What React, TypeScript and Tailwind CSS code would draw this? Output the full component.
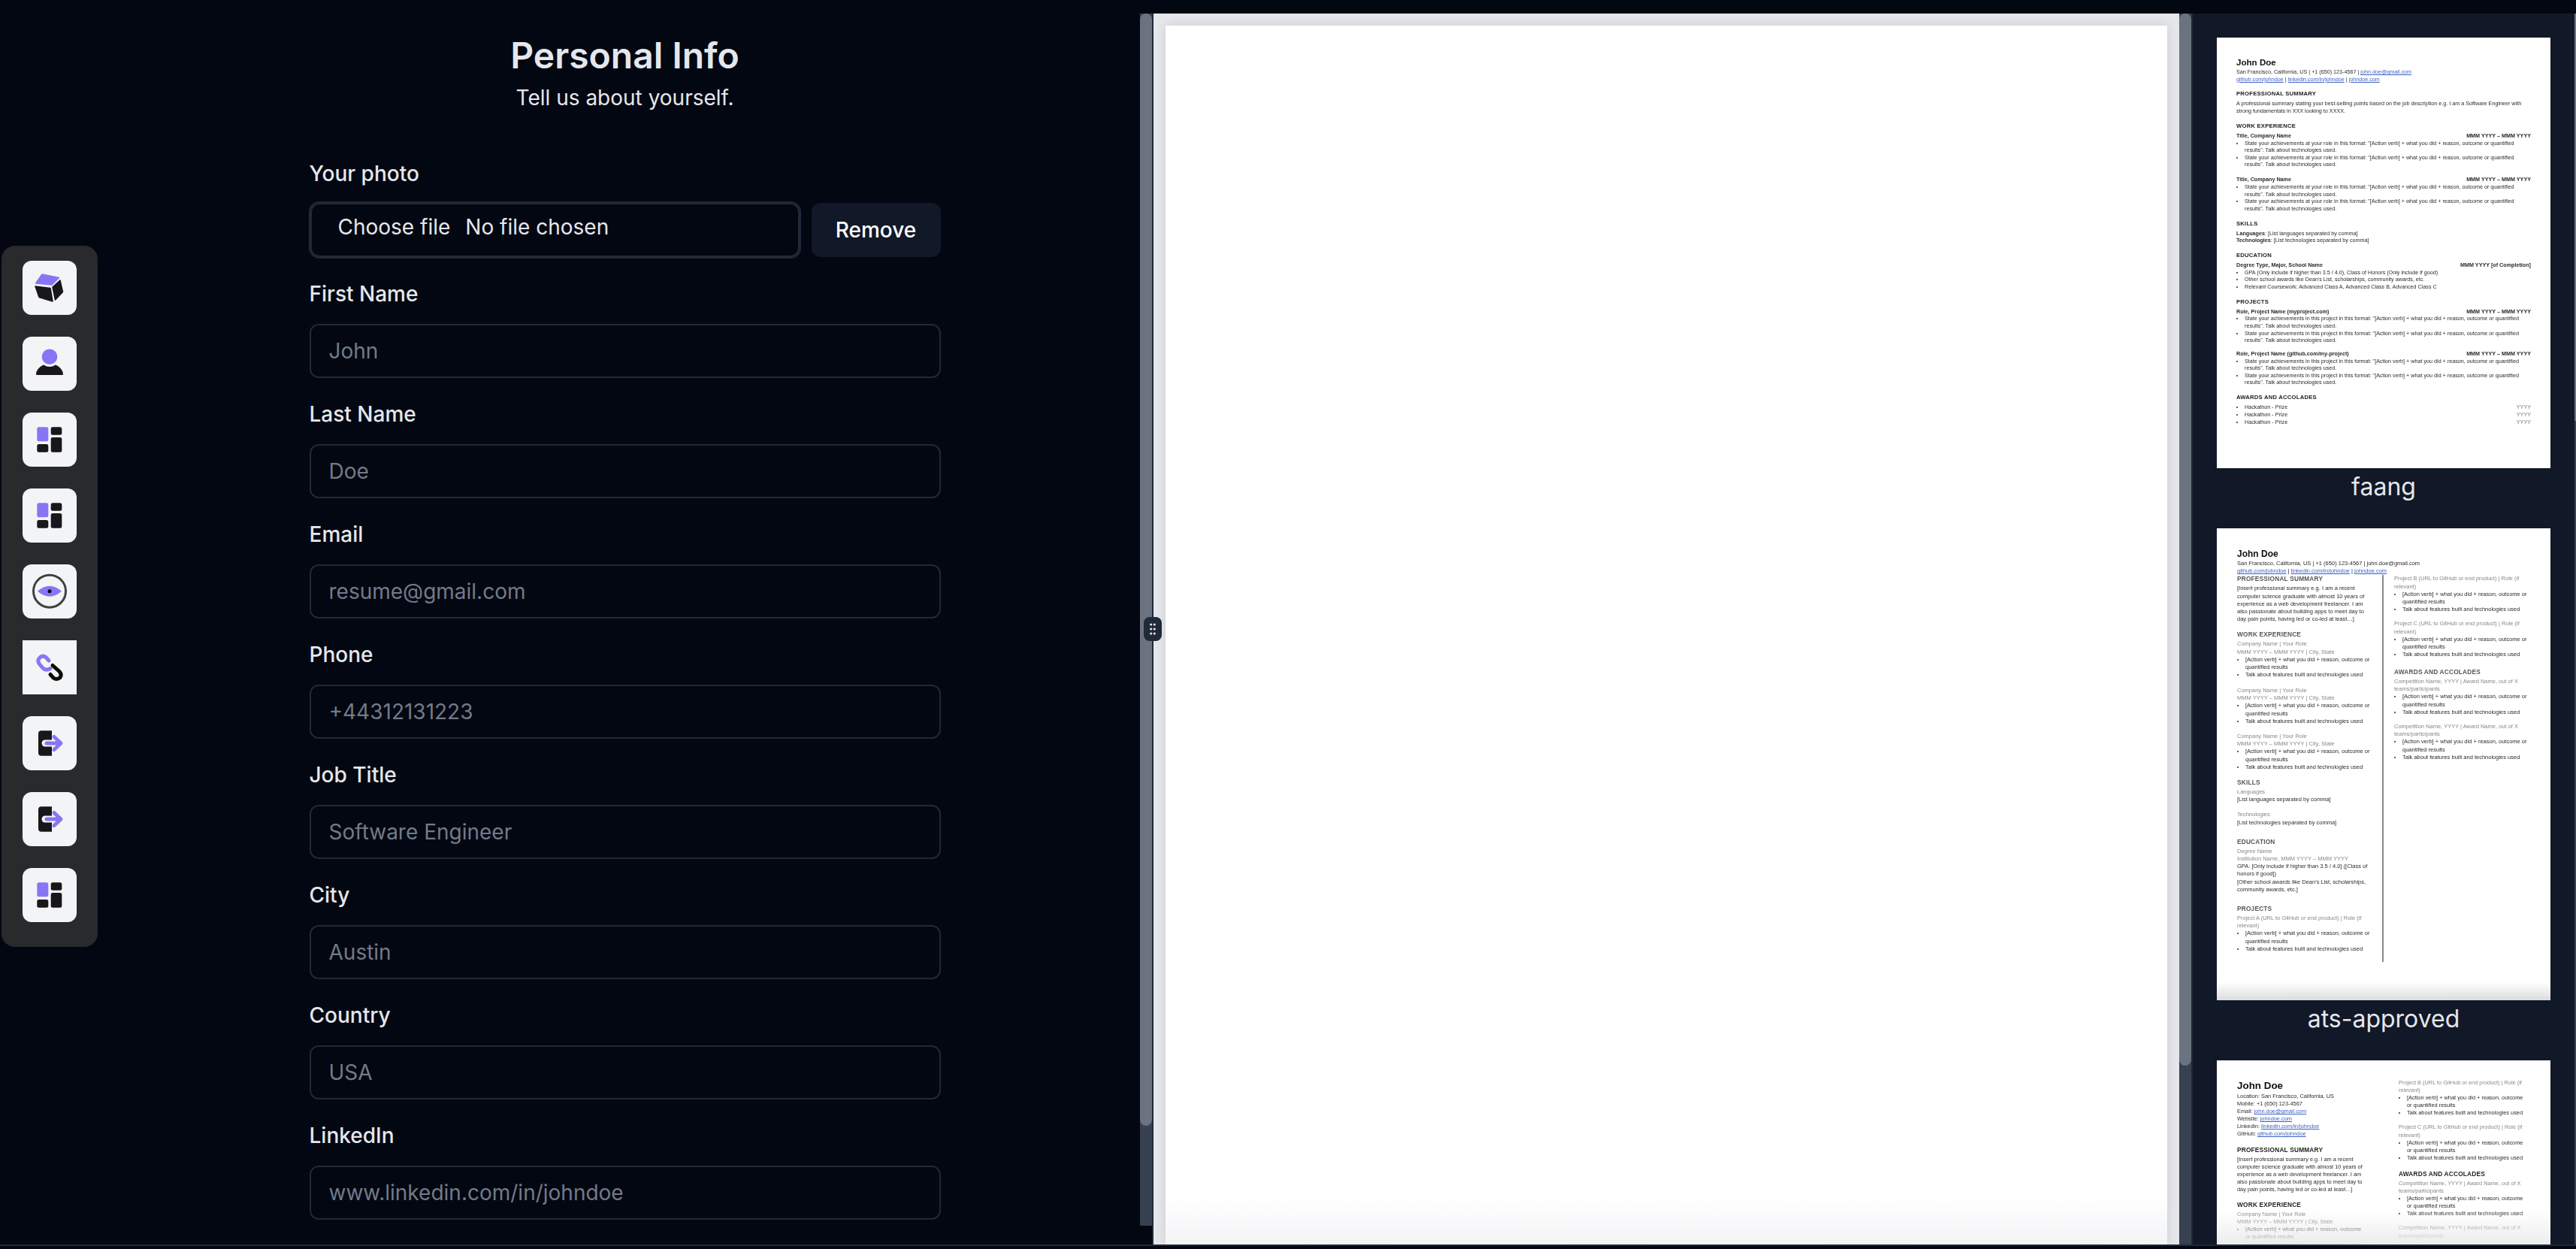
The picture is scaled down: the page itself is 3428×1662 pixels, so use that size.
import type { ReactNode } from "react"

const fields = [
  ["First Name", "John"],
  ["Last Name", "Doe"],
  ["Email", "resume@gmail.com"],
  ["Phone", "+44312131223"],
  ["Job Title", "Software Engineer"],
  ["City", "Austin"],
  ["Country", "USA"],
  ["LinkedIn", "www.linkedin.com/in/johndoe"],
]

const PURPLE = "#8775f5"
const DARK = "#18171c"

function CubeIcon() {
  return (
    <svg viewBox="0 0 72 72" className="w-[72px] h-[72px]">
      <path d="M17.5 30 26 18 48.5 22.5 39 32Z" fill={PURPLE} stroke={PURPLE} strokeWidth="1.5" strokeLinejoin="round" />
      <path d="M17 34 37 36.5 40 54 22 48.5Z" fill={DARK} stroke={DARK} strokeWidth="1.5" strokeLinejoin="round" />
      <path d="M50 26 53.5 41.5 43.5 52 40 35Z" fill={DARK} stroke={DARK} strokeWidth="1.5" strokeLinejoin="round" />
    </svg>
  )
}

function PersonIcon() {
  return (
    <svg viewBox="0 0 72 72" className="w-[72px] h-[72px]">
      <circle cx="36" cy="26.7" r="10.3" fill={PURPLE} />
      <path d="M18 50C18 44.500 23 39.500 28 37.500Q36 42.500 44 37.500C49 39.500 54 44.500 54 50Q54 51 53 51H19Q18 51 18 50Z" fill={DARK} />
    </svg>
  )
}

function LayoutIcon() {
  return (
    <svg viewBox="0 0 72 72" className="w-[72px] h-[72px]">
      <rect x="19.300" y="19.300" width="15" height="19" rx="2.500" fill={PURPLE} />
      <rect x="37.700" y="19.300" width="14.600" height="10.400" rx="2.500" fill={DARK} />
      <rect x="19.300" y="42" width="15" height="10.700" rx="2.500" fill={DARK} />
      <rect x="37.700" y="33" width="14.600" height="19.700" rx="2.500" fill={DARK} />
    </svg>
  )
}

function EyeIcon() {
  return (
    <svg viewBox="0 0 72 72" className="w-[72px] h-[72px]">
      <circle cx="36" cy="35.700" r="21.500" fill="none" stroke="#404040" strokeWidth="3" />
      <path d="M20 35.700Q28 28.700 36 28.700T52 35.700Q44 42.700 36 42.700T20 35.700Z" fill={PURPLE} />
      <circle cx="36" cy="35.700" r="2.500" fill="#0a0a0a" />
    </svg>
  )
}

function LinkIcon() {
  return (
    <svg viewBox="0 0 72 72" className="w-[72px] h-[72px]" fill="none" strokeWidth="5" strokeLinecap="round">
      <path d="M35 27 31.500 23Q27.500 19.500 23.500 22.500 19 26.500 22 31L27 37Q31 41 37 37.500" stroke={PURPLE} />
      <path d="M40 33.500 49 41.500Q53 46 49.500 50 45 53 41 50L37 45.500" stroke="#0a0a0a" />
    </svg>
  )
}

function ExitIcon() {
  return (
    <svg viewBox="0 0 72 72" className="w-[72px] h-[72px]" fill="none">
      <path d="M25 19.300H39V52.700H25Q21 52.700 21 48.700V23.300Q21 19.300 25 19.300Z" fill={DARK} />
      <path d="M30 36H40" stroke="#f3f4f6" strokeWidth="9" strokeLinecap="round" />
      <path d="M32 36H50M42 27.500 51 36 42 44.500" stroke={PURPLE} strokeWidth="5" strokeLinecap="round" strokeLinejoin="round" />
    </svg>
  )
}

function SideButton({ children, square }: { children: ReactNode; square?: boolean }) {
  return <div className={`w-[72px] h-[72px] bg-[#f3f4f6] ${square ? "" : "rounded-[12px]"}`}>{children}</div>
}

function Sidebar() {
  return (
    <div className="absolute left-[2px] top-[327px] w-[128px] flex flex-col items-center gap-[29px] pt-[20px] pb-[33px] bg-[#292a2c] rounded-[18px]">
      <SideButton><CubeIcon /></SideButton>
      <SideButton><PersonIcon /></SideButton>
      <SideButton><LayoutIcon /></SideButton>
      <SideButton><LayoutIcon /></SideButton>
      <SideButton><EyeIcon /></SideButton>
      <SideButton square><LinkIcon /></SideButton>
      <SideButton><ExitIcon /></SideButton>
      <SideButton><ExitIcon /></SideButton>
      <SideButton><LayoutIcon /></SideButton>
    </div>
  )
}

function FormPanel() {
  return (
    <div className="w-[1517px] shrink-0 h-full overflow-hidden pl-[146px] flex flex-col items-center">
      <h1 className="mt-[28px] h-[56px] leading-[56px] text-[48px] font-semibold text-[#e5e7eb]">Personal Info</h1>
      <p className="mt-[8px] h-[40px] leading-[40px] text-[28px] text-[#e5e7eb]">Tell us about yourself.</p>
      <div className="w-[840px] mt-[61px]">
        <label className="block h-[40px] leading-[40px] text-[28px] font-medium text-[#e5e7eb]">Your photo</label>
        <div className="mt-[19px] flex gap-[16px] mb-[29px]">
          <div className="w-[651px] h-[72px] ml-[1px] flex items-center border-2 border-[#1f2937] outline-2 outline-[#1f2937] rounded-[12px] pl-[35px] pb-[8px] text-[28px] leading-[40px] text-[#e5e7eb]">
            <span className="mr-[20px]">Choose file</span>
            <span>No file chosen</span>
          </div>
          <button className="flex-1 h-[72px] bg-[#111827] rounded-[12px] text-[28px] font-medium text-white">Remove</button>
        </div>
        {fields.map(([label, placeholder]) => (
          <div key={label} className="mb-[28px]">
            <label className="block h-[40px] leading-[40px] text-[28px] font-medium text-[#e5e7eb]">{label}</label>
            <input
              placeholder={placeholder}
              className="mt-[20px] block w-full h-[72px] px-[24px] border-2 border-[#1f2937] rounded-[12px] bg-transparent text-[28px] placeholder:text-[#737a87]"
            />
          </div>
        ))}
      </div>
    </div>
  )
}

function Scrollbar({ thumb, track }: { thumb: string; track: string }) {
  return (
    <div className={`w-[16px] shrink-0 bg-[#374151] ${track}`}>
      <div className={`w-full bg-[#6b7280] rounded-full ${thumb}`} />
    </div>
  )
}

function Handle() {
  return (
    <div className="absolute left-[1522px] top-[821px] w-[24px] h-[32px] rounded-[8px] bg-[#1f2937] flex items-center justify-center">
      <svg viewBox="0 0 24 32" className="w-[24px] h-[32px]" fill="#e5e7eb">
        <circle cx="9.700" cy="10" r="1.600" />
        <circle cx="14.300" cy="10" r="1.600" />
        <circle cx="9.700" cy="16" r="1.600" />
        <circle cx="14.300" cy="16" r="1.600" />
        <circle cx="9.700" cy="22" r="1.600" />
        <circle cx="14.300" cy="22" r="1.600" />
      </svg>
    </div>
  )
}

function Preview() {
  return (
    <div className="w-[1365px] shrink-0 h-full overflow-hidden bg-[#e5e7eb] pt-[16px] pl-[16px]">
      <div className="relative w-[1333px] h-full bg-white shadow-[0_0_14px_rgba(0,0,0,0.12)]">
        <div className="absolute left-0 right-0 bottom-0 h-[64px] bg-gradient-to-b from-white to-[#f3f4f6]" />
      </div>
    </div>
  )
}

const Lnk = ({ children }: { children: ReactNode }) => <span className="text-[#3b5fc4] underline">{children}</span>

function Bullets({ items }: { items: string[] }) {
  return (
    <ul className="list-disc pl-[11px]">
      {items.map((t, i) => (
        <li key={i}>{t}</li>
      ))}
    </ul>
  )
}

function Between({ left, right, bold = true }: { left: string; right: string; bold?: boolean }) {
  return (
    <div className={`flex justify-between ${bold ? "font-bold" : ""}`}>
      <span>{left}</span>
      <span>{right}</span>
    </div>
  )
}

const roleBullet = 'State your achievements at your role in this format: "[Action verb] + what you did + reason, outcome or quantified\nresults". Talk about technologies used.'
const projBullet = 'State your achievements in this project in this format: "[Action verb] + what you did + reason, outcome or quantified\nresults". Talk about technologies used.'

function FaangThumb() {
  const H = ({ children, top = "mt-[10.300px]" }: { children: ReactNode; top?: string }) => (
    <div className={`${top} mb-[3px] h-[10px] leading-[10px] text-[7.700px] font-bold tracking-[0.2px] text-[#222]`}>{children}</div>
  )
  return (
    <div className="h-[573px] bg-white px-[26px] pt-[26px] text-[7.200px] leading-[9.600px] text-[#2a2a2a] whitespace-pre font-['Liberation_Sans',sans-serif] blur-[0.3px]">
      <div className="h-[14px] leading-[14px] text-[11.600px] font-bold text-[#111]">John Doe</div>
      <div className="mt-[1px]">San Francisco, California, US | +1 (650) 123-4567 | <Lnk>john.doe@gmail.com</Lnk></div>
      <div><Lnk>github.com/johndoe</Lnk> | <Lnk>linkedin.com/in/johndoe</Lnk> | <Lnk>johndoe.com</Lnk></div>
      <H>PROFESSIONAL SUMMARY</H>
      <div>{"A professional summary stating your best-selling points based on the job description e.g. I am a Software Engineer with\nstrong fundamentals in XXX looking to XXXX."}</div>
      <H>WORK EXPERIENCE</H>
      <Between left="Title, Company Name" right="MMM YYYY – MMM YYYY" />
      <Bullets items={[roleBullet, roleBullet]} />
      <div className="mt-[10.400px]"><Between left="Title, Company Name" right="MMM YYYY – MMM YYYY" /></div>
      <Bullets items={[roleBullet, roleBullet]} />
      <H>SKILLS</H>
      <div><b>Languages</b>: [List languages separated by comma]</div>
      <div><b>Technologies</b>: [List technologies separated by comma]</div>
      <H>EDUCATION</H>
      <Between left="Degree Type, Major, School Name" right="MMM YYYY [of Completion]" />
      <Bullets items={["GPA (Only include if higher than 3.5 / 4.0), Class of Honors (Only include if good)", "Other school awards like Dean's List, scholarships, community awards, etc.", "Relevant Coursework: Advanced Class A, Advanced Class B, Advanced Class C"]} />
      <H>PROJECTS</H>
      <Between left="Role, Project Name (myproject.com)" right="MMM YYYY – MMM YYYY" />
      <Bullets items={[projBullet, projBullet]} />
      <div className="mt-[8.400px]"><Between left="Role, Project Name (github.com/my-project)" right="MMM YYYY – MMM YYYY" /></div>
      <Bullets items={[projBullet, projBullet]} />
      <H>AWARDS AND ACCOLADES</H>
      {[0, 1, 2].map((i) => (
        <div key={i} className="flex justify-between">
          <ul className="list-disc pl-[11px]"><li>Hackathon - Prize</li></ul>
          <span className="text-[#777]">YYYY</span>
        </div>
      ))}
    </div>
  )
}

const actionBullets = ["[Action verb] + what you did + reason, outcome or\nquantified results", "Talk about features built and technologies used"]
const actionBullets3 = ["[Action verb] + what you did + reason, outcome\nor quantified results", "Talk about features built and technologies used"]

function Gray({ children }: { children: ReactNode }) {
  return <div className="text-[#888]">{children}</div>
}

function AtsThumb() {
  const H = ({ children, top }: { children: ReactNode; top: string }) => (
    <div className={`${top} mb-[3px] h-[10px] leading-[10px] text-[8.300px] font-bold tracking-[0.2px] text-[#555]`}>{children}</div>
  )
  const Job = ({ top }: { top: string }) => (
    <div className={top}>
      <Gray>Company Name | Your Role</Gray>
      <Gray>MMM YYYY – MMM YYYY | City, State</Gray>
      <Bullets items={actionBullets} />
    </div>
  )
  return (
    <div className="relative h-[628px] bg-white pl-[27px] pt-[26px] text-[7.500px] leading-[10.200px] text-[#2a2a2a] whitespace-pre font-['Liberation_Sans',sans-serif] blur-[0.3px]">
      <div className="h-[16px] leading-[16px] text-[12px] font-bold text-[#111]">John Doe</div>
      <div>San Francisco, California, US | +1 (650) 123-4567 | john.doe@gmail.com</div>
      <div><Lnk>github.com/johndoe</Lnk> | <Lnk>linkedin.com/in/johndoe</Lnk> | <Lnk>johndoe.com</Lnk></div>
      <div className="flex">
        <div className="w-[195px] h-[515px] border-r-2 border-[#888]">
          <H top="">PROFESSIONAL SUMMARY</H>
          <div>{"[Insert professional summary e.g. I am a recent\ncomputer science graduate with almost 10 years of\nexperience as a web development freelancer. I am\nalso passionate about building apps to meet day to\nday pain points, having led or co-led at least…]"}</div>
          <H top="mt-[10px]">WORK EXPERIENCE</H>
          <Job top="" />
          <Job top="mt-[10.500px]" />
          <Job top="mt-[10px]" />
          <H top="mt-[10px]">SKILLS</H>
          <Gray>Languages</Gray>
          <div>[List languages separated by comma]</div>
          <div className="mt-[10px]"><Gray>Technologies</Gray></div>
          <div>[List technologies separated by comma]</div>
          <H top="mt-[15px]">EDUCATION</H>
          <Gray>Degree Name</Gray>
          <Gray>Institution Name, MMM YYYY – MMM YYYY</Gray>
          <div>{"GPA: [Only include if higher than 3.5 / 4.0] ([Class of\nhonors if good])\n[Other school awards like Dean's List, scholarships,\ncommunity awards, etc.]"}</div>
          <H top="mt-[15px]">PROJECTS</H>
          <Gray>{"Project A (URL to GitHub or end product) | Role (if\nrelevant)"}</Gray>
          <Bullets items={actionBullets} />
        </div>
        <div className="pl-[14px]">
          <Gray>{"Project B (URL to GitHub or end product) | Role (if\nrelevant)"}</Gray>
          <Bullets items={actionBullets} />
          <div className="mt-[9px]"><Gray>{"Project C (URL to GitHub or end product) | Role (if\nrelevant)"}</Gray></div>
          <Bullets items={actionBullets} />
          <H top="mt-[12.500px]">AWARDS AND ACCOLADES</H>
          <Gray>{"Competition Name, YYYY | Award Name, out of X\nteams/participants"}</Gray>
          <Bullets items={actionBullets} />
          <div className="mt-[9px]"><Gray>{"Competition Name, YYYY | Award Name, out of X\nteams/participants"}</Gray></div>
          <Bullets items={actionBullets} />
        </div>
      </div>
      <div className="absolute left-0 right-0 bottom-0 h-[24px] bg-gradient-to-b from-white to-[#dcdcdc]" />
    </div>
  )
}

function ClassicThumb() {
  const H = ({ children, top }: { children: ReactNode; top: string }) => (
    <div className={`${top} mb-[3px] h-[10px] leading-[10px] text-[8.300px] font-bold tracking-[0.2px] text-[#222]`}>{children}</div>
  )
  return (
    <div className="relative h-[628px] bg-white pl-[27px] pt-[26px] text-[7.400px] leading-[10.100px] text-[#2a2a2a] whitespace-pre font-['Liberation_Sans',sans-serif] blur-[0.3px]">
      <div className="flex">
        <div className="w-[215px]">
          <div className="h-[16px] leading-[16px] text-[13.400px] font-bold text-[#111]">John Doe</div>
          <div className="mt-[1px]">Location: San Francisco, California, US</div>
          <div>Mobile: +1 (650) 123-4567</div>
          <div>Email: <Lnk>john.doe@gmail.com</Lnk></div>
          <div>Website: <Lnk>johndoe.com</Lnk></div>
          <div>LinkedIn: <Lnk>linkedin.com/in/johndoe</Lnk></div>
          <div>GitHub: <Lnk>github.com/johndoe</Lnk></div>
          <H top="mt-[10px]">PROFESSIONAL SUMMARY</H>
          <div>{"[Insert professional summary e.g. I am a recent\ncomputer science graduate with almost 10 years of\nexperience as a web development freelancer. I am\nalso passionate about building apps to meet day to\nday pain points, having led or co-led at least…]"}</div>
          <H top="mt-[10px]">WORK EXPERIENCE</H>
          <Gray>Company Name | Your Role</Gray>
          <Gray>MMM YYYY – MMM YYYY | City, State</Gray>
          <Bullets items={actionBullets3} />
        </div>
        <div className="-mt-[1px]">
          <Gray>{"Project B (URL to GitHub or end product) | Role (if\nrelevant)"}</Gray>
          <Bullets items={actionBullets3} />
          <div className="mt-[9px]"><Gray>{"Project C (URL to GitHub or end product) | Role (if\nrelevant)"}</Gray></div>
          <Bullets items={actionBullets3} />
          <H top="mt-[11px]">AWARDS AND ACCOLADES</H>
          <Gray>{"Competition Name, YYYY | Award Name, out of X\nteams/participants"}</Gray>
          <Bullets items={actionBullets3} />
          <div className="mt-[9px]"><Gray>{"Competition Name, YYYY | Award Name, out of X\nteams/participants"}</Gray></div>
        </div>
      </div>
      <div className="absolute left-0 right-0 top-[200px] h-[46px] bg-gradient-to-b from-transparent to-[#ececec]" />
    </div>
  )
}

function Label({ children }: { children: ReactNode }) {
  return <div className="h-[80px] pt-[5px] text-center text-[32px] leading-[40px] text-[#e5e7eb]">{children}</div>
}

function Templates() {
  return (
    <div className="relative flex-1 h-full overflow-hidden bg-[#111827] pl-[32px] pt-[32px] pr-[32px]">
      <div className="w-[444px]">
        <FaangThumb />
        <Label>faang</Label>
        <AtsThumb />
        <Label>ats-approved</Label>
        <ClassicThumb />
      </div>
      <div className="absolute right-0 top-0 bottom-0 w-[2px] bg-[#374151]">
        <div className="h-[542px] bg-[#6b7280]" />
      </div>
    </div>
  )
}

export default function App() {
  return (
    <div className="relative w-[3428px] h-[1662px] overflow-hidden bg-[#030712] font-['Inter',sans-serif] pt-[18px]">
      <div className="h-[1638px] flex">
        <FormPanel />
        <Scrollbar track="h-[1613px]" thumb="h-[1480px]" />
        <div className="w-[2px] shrink-0 bg-[#1f2937]" />
        <Preview />
        <Scrollbar track="" thumb="h-[1400px]" />
        <div className="w-[2px] shrink-0 bg-[#1f2937]" />
        <Templates />
      </div>
      <div className="h-[2px] bg-[#1f2937]" />
      <Sidebar />
      <Handle />
    </div>
  )
}
